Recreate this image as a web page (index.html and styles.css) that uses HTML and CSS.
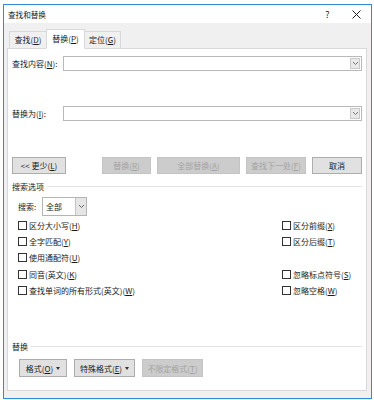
FILE: index.html
```html
<!DOCTYPE html>
<html lang="zh-CN">

<head>
  <meta charset="UTF-8" />
  <meta name="viewport" content="width=device-width, initial-scale=1.0" />
  <title>查找和替换</title>
  <link rel="stylesheet" href="styles.css">
</head>

<body>
  <div class="window">
    <div class="titlebar">
      <span class="title">查找和替换</span>
      <span class="title-btn">?</span>
      <span class="title-btn">
        <svg width="9" height="9" viewBox="0 0 9 9"><path d="M0.5 0.5L8.5 8.5M8.5 0.5L0.5 8.5" stroke="#222" stroke-width="1" fill="none" /></svg>
      </span>
    </div>

    <div class="tabs">
      <div class="tab tab-find">查找(<u>D</u>)</div>
      <div class="tab tab-replace active">替换(<u>P</u>)</div>
      <div class="tab tab-goto">定位(<u>G</u>)</div>
    </div>

    <div class="panel">
      <div class="field">
        <label>查找内容(<u>N</u>):</label>
        <div class="combo">
          <div class="combo-btn"><svg width="5" height="3" viewBox="0 0 5 3"><path d="M0 0L2.5 2.5L5 0" stroke="#777" fill="none" /></svg></div>
        </div>
      </div>

      <div class="field field-replace">
        <label>替换为(<u>I</u>):</label>
        <div class="combo">
          <div class="combo-btn"><svg width="5" height="3" viewBox="0 0 5 3"><path d="M0 0L2.5 2.5L5 0" stroke="#777" fill="none" /></svg></div>
        </div>
      </div>

      <div class="actions">
        <button class="btn btn-less"><span>&lt;&lt; 更少(<u>L</u>)</span></button>
        <div class="actions-right">
          <button class="btn btn-replace" disabled><span>替换(<u>R</u>)</span></button>
          <button class="btn btn-all" disabled><span>全部替换(<u>A</u>)</span></button>
          <button class="btn btn-next" disabled><span>查找下一处(<u>F</u>)</span></button>
          <button class="btn btn-cancel"><span>取消</span></button>
        </div>
      </div>

      <div class="group-title"><span>搜索选项</span></div>

      <div class="search-row">
        <span class="search-label">搜索:</span>
        <div class="select">
          <span class="select-value">全部</span>
          <span class="select-btn"><svg width="5" height="3" viewBox="0 0 5 3"><path d="M0 0L2.5 2.5L5 0" stroke="#666" fill="none" /></svg></span>
        </div>
      </div>

      <div class="options">
        <div class="check"><span class="box"></span><span>区分大小写(<u>H</u>)</span></div>
        <div class="check"><span class="box"></span><span>区分前缀(<u>X</u>)</span></div>
        <div class="check"><span class="box"></span><span>全字匹配(<u>Y</u>)</span></div>
        <div class="check"><span class="box"></span><span>区分后缀(<u>T</u>)</span></div>
        <div class="check"><span class="box"></span><span>使用通配符(<u>U</u>)</span></div>
        <div></div>
        <div class="check"><span class="box"></span><span>同音(英文)(<u>K</u>)</span></div>
        <div class="check"><span class="box"></span><span>忽略标点符号(<u>S</u>)</span></div>
        <div class="check"><span class="box"></span><span>查找单词的所有形式(英文)(<u>W</u>)</span></div>
        <div class="check"><span class="box"></span><span>忽略空格(<u>W</u>)</span></div>
      </div>

      <div class="group-title group-replace"><span>替换</span></div>

      <div class="bottom-btns">
        <button class="btn btn-format"><span>格式(<u>O</u>)</span><span class="caret"></span></button>
        <button class="btn btn-special"><span>特殊格式(<u>E</u>)</span><span class="caret"></span></button>
        <button class="btn btn-noformat" disabled><span>不限定格式(<u>T</u>)</span></button>
      </div>
    </div>
  </div>
</body>

</html>
```

FILE: styles.css
```css
* {
  margin: 0;
  padding: 0;
  box-sizing: border-box;
}

body {
  background: #ffffff;
  font-family: "Noto Sans CJK SC", "Noto Sans", sans-serif;
  font-size: 8px;
  color: #1a1a1a;
}

.window {
  margin: 4px 0 0 3px;
  width: 369px;
  height: 395px;
  border: 1px solid #2f8ad8;
  background: #f0f0f0;
  display: flex;
  flex-direction: column;
}

/* Title bar */
.titlebar {
  height: 18px;
  background: #ffffff;
  display: flex;
  align-items: center;
  padding-left: 4px;
}

.title {
  flex: 1;
  font-size: 7.6px;
}

.title-btn {
  width: 29px;
  height: 18px;
  display: flex;
  align-items: center;
  justify-content: center;
  font-size: 9px;
}

/* Tabs */
.tabs {
  height: 26px;
  display: flex;
  align-items: flex-end;
  padding-left: 5px;
  margin-bottom: -1px;
  position: relative;
  z-index: 1;
}

.tab {
  height: 18px;
  border: 1px solid #d9d9d9;
  background: #f0f0f0;
  line-height: 16px;
  text-align: center;
}

.tab-find {
  width: 38px;
}

.tab-replace {
  width: 39px;
  margin-left: -1px;
}

.tab-goto {
  width: 37px;
  margin-left: -1px;
}

.tab.active {
  height: 20px;
  background: #ffffff;
  border-bottom-color: #ffffff;
  line-height: 17px;
  position: relative;
}

/* Panel */
.panel {
  flex: 1;
  margin: 0 4px 7px 3px;
  background: #ffffff;
  border: 1px solid #d9d9d9;
  padding: 0 4px;
}

.field {
  display: flex;
  align-items: center;
  height: 15px;
  margin-top: 7px;
}

.field-replace {
  margin-top: 35px;
}

.field label {
  width: 51px;
}

.combo {
  flex: 1;
  height: 15px;
  border: 1px solid #b9b9b9;
  display: flex;
  justify-content: flex-end;
  padding: 1px;
}

.combo-btn {
  width: 10px;
  background: #e9e9e9;
  border: 1px solid #c9c9c9;
  display: flex;
  align-items: center;
  justify-content: center;
}

/* Buttons */
.btn {
  height: 17px;
  border: 1px solid #adadad;
  background: #e1e1e1;
  font: inherit;
  color: inherit;
  display: flex;
  align-items: center;
  justify-content: center;
}

.btn:disabled {
  background: #cccccc;
  border-color: #c4c4c4;
  color: #a3a3a3;
}

.actions {
  display: flex;
  justify-content: space-between;
  margin-top: 36px;
}

.actions-right {
  display: flex;
  gap: 6px;
}

.btn-less {
  width: 54px;
}

.btn-replace {
  width: 49px;
}

.btn-all {
  width: 83px;
}

.btn-next {
  width: 60px;
}

.btn-cancel {
  width: 50px;
}

/* Group titles */
.group-title {
  display: flex;
  align-items: center;
  gap: 3px;
  height: 10px;
  margin-top: 7px;
}

.group-title::after {
  content: "";
  flex: 1;
  height: 1px;
  background: #e3e3e3;
}

.group-replace {
  margin-top: 43px;
}

/* Search row */
.search-row {
  display: flex;
  align-items: center;
  margin-top: 6px;
  padding-left: 6px;
}

.search-label {
  width: 24px;
}

.select {
  width: 45px;
  height: 19px;
  border: 1px solid #b4b4b4;
  display: flex;
}

.select-value {
  flex: 1;
  padding-left: 3px;
  line-height: 17px;
}

.select-btn {
  width: 11px;
  background: #e6e6e6;
  border-left: 1px solid #c4c4c4;
  display: flex;
  align-items: center;
  justify-content: center;
}

/* Checkbox grid */
.options {
  display: grid;
  grid-template-columns: 264px 1fr;
  grid-auto-rows: 16.3px;
  margin-top: 1px;
  padding-left: 6px;
}

.check {
  display: flex;
  align-items: center;
  gap: 2px;
}

.box {
  width: 9px;
  height: 9px;
  border: 1px solid #333333;
  background: #ffffff;
}

/* Bottom buttons */
.bottom-btns {
  display: flex;
  gap: 7px;
  margin-top: 8px;
  padding-left: 7px;
}

.bottom-btns .btn {
  height: 18px;
  gap: 3px;
}

.btn-format {
  width: 48px;
}

.btn-special {
  width: 61px;
}

.btn-noformat {
  width: 61px;
}

.caret {
  width: 0;
  height: 0;
  border-left: 2.5px solid transparent;
  border-right: 2.5px solid transparent;
  border-top: 3px solid #333333;
}
```
